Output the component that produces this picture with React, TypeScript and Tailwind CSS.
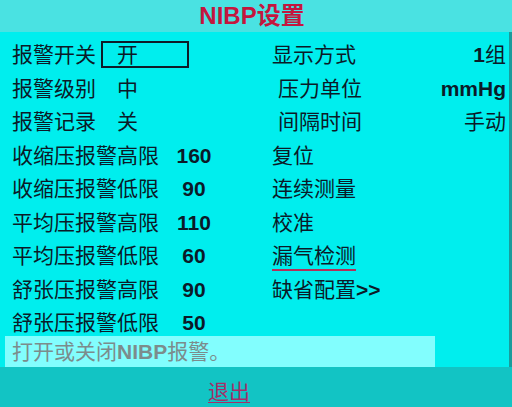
import * as React from "react";

type Row = { label: string; value?: string; num?: boolean; boxed?: boolean };

const leftRows: Row[] = [
  { label: "报警开关", value: "开", boxed: true },
  { label: "报警级别", value: "中" },
  { label: "报警记录", value: "关" },
  { label: "收缩压报警高限", value: "160", num: true },
  { label: "收缩压报警低限", value: "90", num: true },
  { label: "平均压报警高限", value: "110", num: true },
  { label: "平均压报警低限", value: "60", num: true },
  { label: "舒张压报警高限", value: "90", num: true },
  { label: "舒张压报警低限", value: "50", num: true },
];

type RightRow = { label: string; value?: React.ReactNode; indent?: boolean; underline?: boolean; more?: boolean };

const rightRows: RightRow[] = [
  {
    label: "显示方式",
    value: (
      <>
        <span className="font-bold">1</span>组
      </>
    ),
  },
  { label: "压力单位", value: <span className="font-bold">mmHg</span>, indent: true },
  { label: "间隔时间", value: "手动", indent: true },
  { label: "复位" },
  { label: "连续测量" },
  { label: "校准" },
  { label: "漏气检测", underline: true },
  { label: "缺省配置", more: true },
];

function LeftRow({ row }: { row: Row }) {
  return (
    <div className="flex h-[33.5px] items-center">
      <span className="shrink-0">{row.label}</span>
      {row.num ? (
        <span className="ml-auto w-[48px] text-center font-bold">{row.value}</span>
      ) : (
        <span
          className={
            "ml-[5px] flex h-[27px] w-[88px] items-center border-2 pl-[14px] " +
            (row.boxed ? "border-[#0e1c28]" : "border-transparent")
          }
        >
          {row.value}
        </span>
      )}
    </div>
  );
}

export default function App() {
  return (
    <div
      className="flex h-[407px] w-[512px] flex-col overflow-hidden text-[21px] leading-none text-[#0b1a28]"
      style={{ fontFamily: '"Liberation Sans", "Noto Sans CJK SC", sans-serif' }}
    >
      <div className="flex h-[32px] shrink-0 items-center justify-center bg-[#4ae2e2] pr-[8px] text-[24px] font-bold text-[#c4163e]">
        NIBP设置
      </div>

      <div className="flex shrink-0 flex-col border-r-[3px] border-r-[#1a9c9c] bg-[#00eeee]">
        <div className="flex pt-[6px]">
          <div className="w-[218px] pl-[12px]">
            {leftRows.map((r) => (
              <LeftRow key={r.label} row={r} />
            ))}
          </div>
          <div className="flex-1 pl-[54px] pr-[3px]">
            {rightRows.map((r) => (
              <div key={r.label} className="flex h-[33.5px] items-center">
                <span
                  className={
                    (r.indent ? "pl-[6px] " : "") +
                    (r.underline
                      ? "underline decoration-[#b3305a] decoration-2 underline-offset-[6px]"
                      : "")
                  }
                >
                  {r.label}
                  {r.more && <span className="font-bold">&gt;&gt;</span>}
                </span>
                {r.value && <span className="ml-auto">{r.value}</span>}
              </div>
            ))}
          </div>
        </div>
        <div className="-mt-[4px] ml-[5px] flex h-[31px] w-[430px] items-center bg-[#82fefe] pl-[7px] text-[#7c8c8c]">
          打开或关闭<span className="font-bold">NIBP</span>报警。
        </div>
      </div>

      <div className="flex flex-1 items-center bg-[#12c4c4] pl-[208px] pt-[9px]">
        <span className="text-[#a52f68] underline decoration-1 underline-offset-[3px]">退出</span>
      </div>
    </div>
  );
}
